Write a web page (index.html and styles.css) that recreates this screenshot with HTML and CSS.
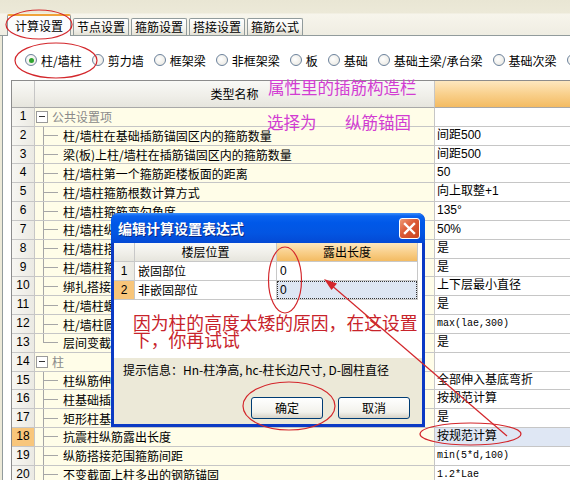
FILE: index.html
```html
<!DOCTYPE html>
<html>
<head>
<meta charset="utf-8">
<link rel="stylesheet" href="styles.css">
</head>
<body>
<div class="app">
  <div class="tabbar">
    <div class="tab active">计算设置</div>
    <div class="tab">节点设置</div>
    <div class="tab">箍筋设置</div>
    <div class="tab">搭接设置</div>
    <div class="tab">箍筋公式</div>
  </div>
  <div class="panel">
    <div class="radios">
      <label class="radio checked"><span class="circle"></span>柱/墙柱</label>
      <label class="radio"><span class="circle"></span>剪力墙</label>
      <label class="radio"><span class="circle"></span>框架梁</label>
      <label class="radio"><span class="circle"></span>非框架梁</label>
      <label class="radio"><span class="circle"></span>板</label>
      <label class="radio"><span class="circle"></span>基础</label>
      <label class="radio"><span class="circle"></span>基础主梁/承台梁</label>
      <label class="radio"><span class="circle"></span>基础次梁</label>
      <label class="radio"><span class="circle"></span></label>
    </div>
    <div class="sheet">
      <div class="row head"><div class="num"></div><div class="name">类型名称</div><div class="val"></div></div>
      <div class="row"><div class="num">1</div><div class="name group"><span class="box"></span>公共设置项</div><div class="val"></div></div>
      <div class="row"><div class="num">2</div><div class="name"><span class="twig"></span>柱/墙柱在基础插筋锚固区内的箍筋数量</div><div class="val">间距500</div></div>
      <div class="row"><div class="num">3</div><div class="name"><span class="twig"></span>梁(板)上柱/墙柱在插筋锚固区内的箍筋数量</div><div class="val">间距500</div></div>
      <div class="row"><div class="num">4</div><div class="name"><span class="twig"></span>柱/墙柱第一个箍筋距楼板面的距离</div><div class="val">50</div></div>
      <div class="row"><div class="num">5</div><div class="name"><span class="twig"></span>柱/墙柱箍筋根数计算方式</div><div class="val">向上取整+1</div></div>
      <div class="row"><div class="num">6</div><div class="name"><span class="twig"></span>柱/墙柱箍筋弯勾角度</div><div class="val">135°</div></div>
      <div class="row"><div class="num">7</div><div class="name"><span class="twig"></span>柱/墙柱纵筋搭接接头错开百分率</div><div class="val">50%</div></div>
      <div class="row"><div class="num">8</div><div class="name"><span class="twig"></span>柱/墙柱搭接部位箍筋加密</div><div class="val">是</div></div>
      <div class="row"><div class="num">9</div><div class="name"><span class="twig"></span>柱/墙柱箍筋加密区根数计算方式</div><div class="val">是</div></div>
      <div class="row"><div class="num">10</div><div class="name"><span class="twig"></span>绑扎搭接范围内箍筋间距中d的取值</div><div class="val">上下层最小直径</div></div>
      <div class="row"><div class="num">11</div><div class="name"><span class="twig"></span>柱/墙柱螺旋箍筋是否连续通过</div><div class="val">是</div></div>
      <div class="row"><div class="num">12</div><div class="name"><span class="twig"></span>柱/墙柱圆形箍筋的搭接长度</div><div class="val mono">max(lae,300)</div></div>
      <div class="row"><div class="num">13</div><div class="name"><span class="twig end"></span>层间变截面钢筋自动判断</div><div class="val">是</div></div>
      <div class="row"><div class="num">14</div><div class="name group"><span class="box"></span>柱</div><div class="val"></div></div>
      <div class="row"><div class="num">15</div><div class="name"><span class="twig"></span>柱纵筋伸入基础锚固形式</div><div class="val">全部伸入基底弯折</div></div>
      <div class="row"><div class="num">16</div><div class="name"><span class="twig"></span>柱基础插筋弯折长度</div><div class="val">按规范计算</div></div>
      <div class="row"><div class="num">17</div><div class="name"><span class="twig"></span>矩形柱基础内箍筋设置</div><div class="val">是</div></div>
      <div class="row sel"><div class="num">18</div><div class="name"><span class="twig"></span>抗震柱纵筋露出长度</div><div class="val">按规范计算</div></div>
      <div class="row"><div class="num">19</div><div class="name"><span class="twig"></span>纵筋搭接范围箍筋间距</div><div class="val mono">min(5*d,100)</div></div>
      <div class="row"><div class="num">20</div><div class="name"><span class="twig"></span>不变截面上柱多出的钢筋锚固</div><div class="val mono">1.2*Lae</div></div>
    </div>
  </div>
</div>

<div class="note n1">属性里的插筋构造栏</div>
<div class="note n2">选择为</div>
<div class="note n3">纵筋锚固</div>

<div class="dialog">
  <div class="title">
    <span class="title-text">编辑计算设置表达式</span>
    <span class="close"><svg width="19" height="19" viewBox="0 0 19 19"><path d="M5 5 L14 14 M14 5 L5 14" stroke="#fff" stroke-width="2.4" stroke-linecap="square"/></svg></span>
  </div>
  <div class="dbody">
    <div class="dsheet">
      <div class="drow dhead"><div class="dnum"></div><div class="dc1">楼层位置</div><div class="dc2">露出长度</div></div>
      <div class="drow"><div class="dnum">1</div><div class="dc1">嵌固部位</div><div class="dc2">0</div></div>
      <div class="drow cur"><div class="dnum">2</div><div class="dc1">非嵌固部位</div><div class="dc2"><span class="focus">0</span></div></div>
      <div class="redtext">因为柱的高度太矮的原因，在这设置<br>下，你再试试</div>
    </div>
    <div class="hint">提示信息：Hn-柱净高, hc-柱长边尺寸, D-圆柱直径</div>
    <div class="btns">
      <div class="btn">确定</div>
      <div class="btn">取消</div>
    </div>
  </div>
</div>

<svg class="marks" width="570" height="480" viewBox="0 0 570 480">
  <g fill="none" stroke="#d3262b" stroke-width="1.2">
    <ellipse cx="39" cy="24.5" rx="33" ry="14.5"/>
    <ellipse cx="56" cy="60.5" rx="41" ry="17.5"/>
    <ellipse cx="285" cy="280" rx="16.5" ry="33"/>
    <ellipse cx="289" cy="406" rx="46" ry="24"/>
    <ellipse cx="470.5" cy="434" rx="50.5" ry="11"/>
    <line x1="507" y1="436" x2="330" y2="284"/>
  </g>
  <polygon points="324,279 331.5,290 337,283.5" fill="#d3262b"/>
</svg>
</body>
</html>
```

FILE: styles.css
```css
* { box-sizing: border-box; }
html, body { margin: 0; padding: 0; }
body {
  width: 570px;
  height: 480px;
  overflow: hidden;
  position: relative;
  background: #ece9d8;
  font-family: "Noto Sans CJK SC", "Liberation Sans", sans-serif;
  font-size: 12px;
  color: #000;
}
.app { display: flex; flex-direction: column; height: 480px; }

/* tabs */
.tabbar {
  height: 36px;
  flex: none;
  display: flex;
  align-items: flex-end;
  padding-left: 7px;
  border-bottom: 1px solid #919b9c;
  background: linear-gradient(#e9e6d4 0, #ece9d8 13px, #f7f5ec 14px, #efede2 100%);
}
.tab {
  height: 17px;
  line-height: 16px;
  padding: 0 3px;
  margin-left: 2px;
  border: 1px solid #919b9c;
  border-bottom: none;
  border-radius: 2px 2px 0 0;
  background: linear-gradient(#ffffff, #f4f3ee 60%, #e3e1d5);
  white-space: nowrap;
}
.tab.active {
  height: 22px;
  line-height: 18px;
  padding: 1px 7px 0;
  margin-left: 0;
  margin-bottom: -1px;
  background: #fcfcfe;
  border-top: 2px solid #f0a23a;
}

/* panel */
.panel {
  flex: 1;
  margin-left: 2px;
  border-left: 1px solid #919b9c;
  background: #fff;
  overflow: hidden;
}
.radios {
  height: 44px;
  display: flex;
  align-items: center;
  padding: 4px 0 0 22px;
  white-space: nowrap;
}
.radio {
  display: flex;
  align-items: center;
  gap: 4px;
  margin-right: 10px;
  flex: none;
}
.circle {
  width: 12px;
  height: 12px;
  border-radius: 50%;
  border: 1px solid #6c829c;
  background: radial-gradient(circle at 40% 40%, #ffffff, #e6e4dc);
  display: flex;
  align-items: center;
  justify-content: center;
}
.radio.checked .circle::after {
  content: "";
  width: 5px;
  height: 5px;
  border-radius: 50%;
  background: #2fa32f;
}

/* main sheet */
.sheet {
  margin-left: 8px;
  border-left: 1px solid #8c8c8c;
  border-top: 1px solid #8c8c8c;
  width: 570px;
}
.row {
  display: grid;
  grid-template-columns: 23px 400px 140px;
  height: 18.84px;
}
.row > div {
  border-right: 1px solid #c6c6c6;
  border-bottom: 1px solid #c6c6c6;
  white-space: nowrap;
  overflow: hidden;
}
.num {
  background: linear-gradient(to right, #f7f6f2, #ebeae3);
  text-align: center;
  font-family: "Liberation Sans", sans-serif;
  font-size: 12px;
  line-height: 17px;
}
.name {
  background: #fffde8;
  display: flex;
  align-items: center;
  line-height: 17px;
}
.val {
  background: #fff;
  padding-left: 2px;
  font-family: "Liberation Sans", "Noto Sans CJK SC", sans-serif;
  line-height: 17px;
}
.val.mono { font-family: "Liberation Mono", monospace; font-size: 10px; }
.row.head { height: 27px; }
.row.head > div { border-bottom-color: #a8a8a8; }
.row.head .num, .row.head .name {
  background: linear-gradient(#f9f9f6, #efeee8 60%, #e6e5dd);
}
.row.head .name { justify-content: center; line-height: 26px; }
.row.head .val { background: linear-gradient(#fde7bf, #f9d08c 50%, #f3bb62); }
.row.sel .num { background: #f8c67b; }
.row.sel .val { background: #dfe7f4; }

.twig {
  flex: none;
  width: 15px;
  margin-left: 8px;
  margin-right: 5px;
  align-self: stretch;
  background:
    linear-gradient(#a6a6a6, #a6a6a6) 0 0 / 1px 100% no-repeat,
    linear-gradient(#a6a6a6, #a6a6a6) 0 50% / 100% 1px no-repeat;
}
.twig.end {
  background:
    linear-gradient(#a6a6a6, #a6a6a6) 0 0 / 1px 50% no-repeat,
    linear-gradient(#a6a6a6, #a6a6a6) 0 50% / 100% 1px no-repeat;
}
.name.group { color: #8a8a8a; }
.box {
  flex: none;
  width: 12px;
  height: 12px;
  margin-left: 1px;
  margin-right: 4px;
  border: 1px solid #9a9a9a;
  background: #fff;
  display: flex;
  align-items: center;
  justify-content: center;
}
.box::after {
  content: "";
  width: 6px;
  height: 1px;
  background: #333;
}

/* annotations */
.note {
  position: absolute;
  color: #d23cd2;
  font-size: 16.5px;
  line-height: 18px;
  white-space: nowrap;
}
.n1 { left: 268px; top: 78px; }
.n2 { left: 267px; top: 113px; }
.n3 { left: 345px; top: 113px; }

.marks { position: absolute; left: 0; top: 0; pointer-events: none; }

/* dialog */
.dialog {
  position: absolute;
  left: 111px;
  top: 213px;
  width: 314px;
  height: 214px;
  background: #0b3ac4;
  border-radius: 7px 7px 0 0;
  padding: 0 3px 3px;
  display: flex;
  flex-direction: column;
  overflow: hidden;
}
.title {
  flex: none;
  height: 30px;
  margin: 0 -3px;
  padding: 0 5px 0 7px;
  display: flex;
  align-items: center;
  justify-content: space-between;
  background: linear-gradient(#3b8ffb 0, #0a63ee 3px, #0058e8 10px, #0355e2 20px, #0449d4 30px);
  border-radius: 7px 7px 0 0;
}
.title-text {
  color: #fff;
  font-weight: bold;
  font-size: 14px;
  text-shadow: 1px 1px 0 #0a2a86;
}
.close {
  width: 21px;
  height: 21px;
  border: 1px solid #fff;
  border-radius: 3px;
  background: linear-gradient(135deg, #ee9a76, #dc5a36 45%, #c9431f);
  display: flex;
  align-items: center;
  justify-content: center;
}
.dbody {
  flex: 1;
  background: #ece9d8;
  display: flex;
  flex-direction: column;
}
.dsheet {
  height: 115px;
  flex: none;
  background: #fff;
}
.drow {
  display: grid;
  grid-template-columns: 21px 142px 141px;
  height: 19px;
  width: 305px;
}
.drow > div {
  border-right: 1px solid #c8c8c8;
  border-bottom: 1px solid #c8c8c8;
  line-height: 18px;
  white-space: nowrap;
}
.dnum {
  background: linear-gradient(to right, #f7f6f2, #ebeae3);
  text-align: center;
  font-family: "Liberation Sans", sans-serif;
}
.dc1 { padding-left: 3px; }
.dc2 { padding-left: 3px; font-family: "Liberation Sans", sans-serif; }
.dhead .dnum, .dhead .dc1 {
  background: linear-gradient(#f9f9f6, #efeee8 60%, #e6e5dd);
}
.dhead .dc1, .dhead .dc2 { text-align: center; padding-left: 0; font-family: "Noto Sans CJK SC", sans-serif; }
.dhead .dc2 { background: linear-gradient(#fde7bf, #f9d08c 50%, #f3bb62); }
.drow.cur .dnum { background: #f8c67b; }
.drow.cur .dc2 { padding: 0; }
.focus {
  display: block;
  height: 18px;
  padding-left: 2px;
  border: 1px dotted #333;
  background: #dde6f3;
  line-height: 16px;
}
.redtext {
  color: #c8232b;
  font-size: 17.8px;
  line-height: 17px;
  padding: 14px 0 0 19px;
  white-space: nowrap;
}
.hint {
  padding: 4px 0 0 9px;
  line-height: 16px;
  white-space: nowrap;
}
.btns {
  margin-top: auto;
  display: flex;
  justify-content: flex-end;
  gap: 15px;
  padding: 0 12px 5px 0;
}
.btn {
  width: 72px;
  height: 22px;
  border: 1px solid #003c74;
  border-radius: 3px;
  background: linear-gradient(#ffffff, #f3f2ec 70%, #d8d3c7);
  text-align: center;
  line-height: 20px;
}
```
